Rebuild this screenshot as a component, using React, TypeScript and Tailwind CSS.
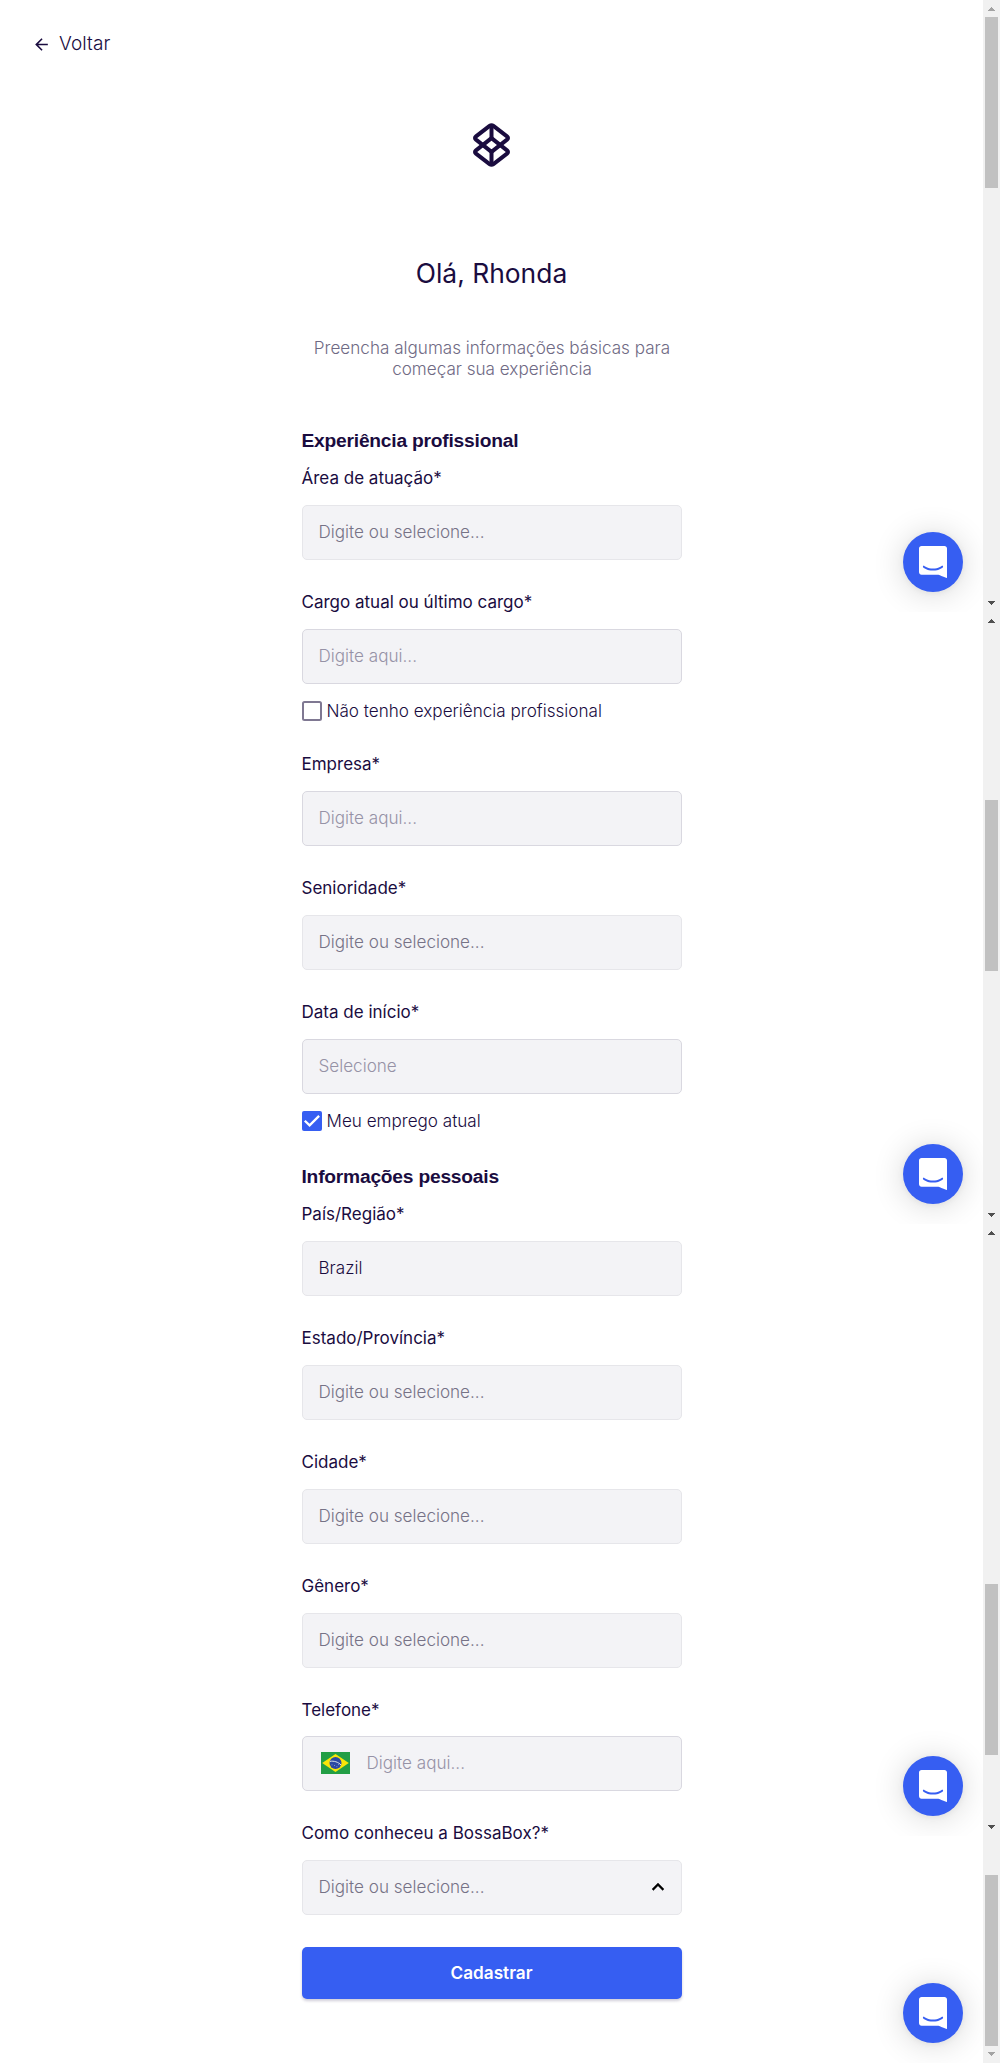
import type { ReactNode } from 'react'

function Logo() {
  return (
    <svg width="37" height="44" viewBox="0 0 37 44" fill="none" stroke="#1a0c3f" strokeWidth="4" strokeLinejoin="round">
      <path d="M16.6 2.9Q18.5 1.5 20.4 2.9L34 13.4Q36 15 34 16.7L18.5 28.8L3 16.7Q1 15 3 13.4Z" />
      <path d="M16.6 41.1Q18.5 42.5 20.4 41.1L34 30.6Q36 29 34 27.3L18.5 15.2L3 27.3Q1 29 3 30.6Z" />
      <path d="M18.5 2V15M18.5 29V42" />
    </svg>
  )
}

function Flag() {
  return (
    <svg width="29" height="22" viewBox="0 0 29 22" className="shrink-0">
      <rect width="29" height="22" fill="#229e45" />
      <path d="M14.5 2L27.8 11L14.5 20L1.2 11Z" fill="#f8e509" />
      <circle cx="14.5" cy="11" r="6" fill="#2b49a3" />
      <path d="M9 9.4C12.6 8.6 17.4 10 20 13" stroke="#dbe6ef" strokeWidth="1" fill="none" />
      <path d="M10.5 12.8h1M13 13.5h1M15.4 14.6h1M17 12.6h1" stroke="#8ea2d4" strokeWidth=".8" />
    </svg>
  )
}

function Heading({ children, className = '' }: { children: ReactNode; className?: string }) {
  return <h2 className={`-ml-[0.5px] font-['Liberation_Sans',sans-serif] text-[19.2px] leading-6 font-bold tracking-[-0.21px] text-[#1a0c3f] ${className}`}>{children}</h2>
}

type FieldProps = {
  label: string
  text: string
  kind?: 'select' | 'input' | 'value'
  className?: string
  gap?: string
  before?: ReactNode
  after?: ReactNode
}

function Field({ label, text, kind = 'select', className = 'mt-8', gap = 'mt-[17px]', before, after }: FieldProps) {
  const border = kind === 'input' ? 'border-[#d9d8e0]' : 'border-[#e6e6ea]'
  const color = kind === 'input' ? 'text-[#9692a6]' : kind === 'value' ? 'text-[#1a0c3f]' : 'text-[#767286]'
  return (
    <div className={className}>
      <label className="-ml-[0.5px] block text-[17px] leading-5 text-[#1a0c3f]">{label}</label>
      <div className={`flex h-[55px] items-center rounded-[5px] border bg-[#f3f3f6] px-[15.5px] ${gap} ${border}`}>
        {before}
        <span className={`text-[17.1px] leading-5 font-light ${color}`}>{text}</span>
        {after}
      </div>
    </div>
  )
}

function Check({ label, checked = false }: { label: string; checked?: boolean }) {
  return (
    <div className="mt-[17px] flex h-5 items-center gap-[4.5px]">
      {checked ? (
        <span className="flex size-5 items-center justify-center rounded-[2px] bg-[#365ef2]">
          <svg width="20" height="20" viewBox="0 0 20 20" fill="none" stroke="#fff" strokeWidth="2.3">
            <path d="M2.8 9.7L7.6 14.4L17.1 4.9" />
          </svg>
        </span>
      ) : (
        <svg width="20" height="20" viewBox="0 0 20 20" fill="none">
          <rect x="1" y="1" width="18" height="18" rx="1.5" stroke="#7f7892" strokeWidth="2" />
        </svg>
      )}
      <span className="text-[17.1px] leading-5 font-light whitespace-nowrap text-[#1a0c3f]">{label}</span>
    </div>
  )
}

function Chat({ className }: { className: string }) {
  return (
    <div className={`flex shrink-0 items-end justify-end overflow-hidden pr-5 pb-5 ${className}`}>
      <button className="flex size-[60px] items-center justify-center rounded-full bg-[#365ef2] shadow-[0_1px_6px_rgba(0,0,0,0.06),0_2px_32px_rgba(0,0,0,0.16)]">
        <svg width="28" height="32" viewBox="0 0 28 32" fill="#fff">
          <path d="M28 32s-4.714-1.855-8.527-3.34H2.6C1.1 28.66 0 27.5 0 26V2.6C0 1.1 1.1 0 2.6 0h22.8C26.9 0 28 1.1 28 2.6V32zm-4.139-11.982a.88.88 0 00-1.292-.105c-.03.026-3.015 2.681-8.57 2.681-5.486 0-8.517-2.636-8.571-2.684a.88.88 0 00-1.29.107 1.01 1.01 0 00-.219.708.992.992 0 00.318.664c.142.128 3.537 3.15 9.762 3.15 6.226 0 9.621-3.022 9.763-3.15a.992.992 0 00.317-.664 1.01 1.01 0 00-.218-.707z" />
        </svg>
      </button>
    </div>
  )
}

function Arrow({ down = false, muted = false }: { down?: boolean; muted?: boolean }) {
  return (
    <svg width="7" height="4" viewBox="0 0 7 4" shapeRendering="crispEdges" className={`shrink-0 ${muted ? 'fill-[#a3a3a3]' : 'fill-[#505050]'}`}>
      {down ? <path d="M0 0h7v1H0zM1 1h5v1H1zM2 2h3v1H2zM3 3h1v1H3z" /> : <path d="M3 0h1v1H3zM2 1h3v1H2zM1 2h5v1H1zM0 3h7v1H0z" />}
    </svg>
  )
}

function Scroll({ className, thumb, up = true, down = true, upMuted = false, downMuted = false }: {
  className: string
  thumb: string
  up?: boolean
  down?: boolean
  upMuted?: boolean
  downMuted?: boolean
}) {
  return (
    <div className={`flex shrink-0 flex-col ${className}`}>
      <div className="h-[17px] shrink-0 pt-[7px] pl-[5px]">{up && <Arrow muted={upMuted} />}</div>
      <div className="flex grow flex-col pl-[2px]">
        <div className={`h-[171px] w-[13px] bg-[#c1c1c1] ${thumb}`} />
      </div>
      <div className="h-[17px] shrink-0 pt-[6px] pl-[5px]">{down && <Arrow down muted={downMuted} />}</div>
    </div>
  )
}

export default function App() {
  return (
    <div className="flex h-[2063px] w-[1000px] overflow-hidden bg-white font-['Inter',sans-serif] text-[#1a0c3f]">
      <main className="relative w-[983px]">
        <a className="flex h-[88px] w-fit items-center gap-[8px] pl-8">
          <svg width="19" height="19" viewBox="0 0 24 24" fill="#1a0c3f">
            <path d="M20 11H7.83l5.59-5.59L12 4l-8 8 8 8 1.41-1.41L7.83 13H20z" />
          </svg>
          <span className="text-[19px] leading-6 font-light tracking-[0.08px]">Voltar</span>
        </a>
        <div className="flex justify-center pt-[35px]">
          <Logo />
        </div>
        <h1 className="mt-[90px] text-center text-[26.4px] leading-8">Olá, Rhonda</h1>
        <p className="mx-auto mt-[48px] w-[380px] pl-px text-center text-[17.1px] leading-[21.3px] font-light text-[#6f6a84]">
          Preencha algumas informações básicas para começar sua experiência
        </p>
        <form className="mx-auto w-[381px] pt-[49.4px] pl-px">
          <Heading>Experiência profissional</Heading>
          <Field label="Área de atuação*" text="Digite ou selecione..." className="mt-[15px]" />
          <Field label="Cargo atual ou último cargo*" text="Digite aqui..." kind="input" />
          <Check label="Não tenho experiência profissional" />
          <Field label="Empresa*" text="Digite aqui..." kind="input" className="mt-[33px]" />
          <Field label="Senioridade*" text="Digite ou selecione..." />
          <Field label="Data de início*" text="Selecione" kind="input" />
          <Check label="Meu emprego atual" checked />
          <Heading className="mt-[34px]">Informações pessoais</Heading>
          <Field label="País/Região*" text="Brazil" kind="value" className="mt-[15px]" />
          <Field label="Estado/Província*" text="Digite ou selecione..." />
          <Field label="Cidade*" text="Digite ou selecione..." />
          <Field label="Gênero*" text="Digite ou selecione..." />
          <Field
            label="Telefone*"
            text="Digite aqui..."
            kind="input"
            gap="mt-4"
            before={
              <span className="mr-[16.5px] ml-[2.5px]">
                <Flag />
              </span>
            }
          />
          <Field
            label="Como conheceu a BossaBox?*"
            text="Digite ou selecione..."
            after={
              <svg width="24" height="24" viewBox="0 0 24 24" className="mr-[-4.5px] ml-auto">
                <path d="M12 8l-6 6 1.41 1.41L12 10.83l4.59 4.58L18 14z" stroke="#000" strokeWidth=".4" />
              </svg>
            }
          />
          <button
            type="button"
            className="mt-8 flex h-[52px] w-full items-center justify-center rounded-[5px] bg-[#365ef2] pr-px text-[17.2px] font-semibold text-white shadow-[0_2px_3px_rgba(26,12,63,0.2)]"
          >
            Cadastrar
          </button>
        </form>
        <div className="pointer-events-none absolute top-0 right-0 flex w-[140px] flex-col">
          <Chat className="h-[612px]" />
          <Chat className="h-[612px]" />
          <Chat className="h-[612px]" />
          <Chat className="h-[227px]" />
        </div>
      </main>
      <aside className="flex w-[17px] flex-col bg-[#f1f1f1]">
        <Scroll className="h-[612px]" thumb="mt-0" upMuted />
        <Scroll className="h-[612px]" thumb="mt-[171px]" />
        <Scroll className="h-[612px]" thumb="mt-[343px]" />
        <Scroll className="h-[227px]" thumb="mt-[22px]" up={false} downMuted />
      </aside>
    </div>
  )
}
